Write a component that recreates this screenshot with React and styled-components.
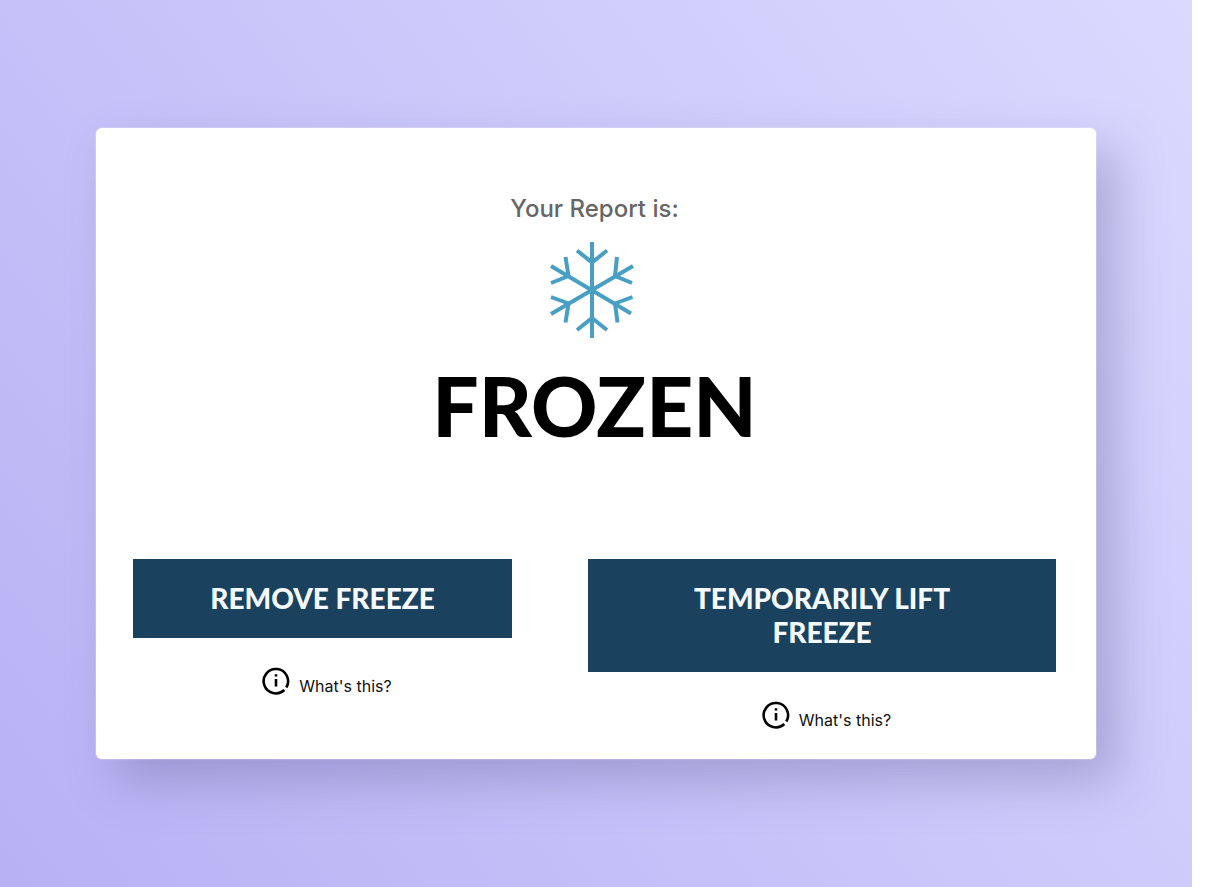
import React from "react";
import styled, { createGlobalStyle } from "styled-components";

const GlobalStyle = createGlobalStyle`
  *, *::before, *::after { box-sizing: border-box; }
  body { margin: 0; background: #ffffff; font-family: Lato, "Liberation Sans", sans-serif; }
`;

const Page = styled.div`
  min-height: 100vh;
  padding-right: 27px;
  display: flex;
`;

const Backdrop = styled.main`
  flex: 1;
  padding: 128px 96px;
  background: linear-gradient(52deg, #b8b1f4 0%, #cac6fa 50%, #dbd9ff 100%);
`;

const Card = styled.section`
  display: flex;
  flex-direction: column;
  align-items: center;
  padding: 64px 40px 27px 37px;
  border-radius: 6px;
  background: #ffffff;
  box-shadow: 0 0 2px rgba(255, 255, 255, 0.7), 20px 22px 48px rgba(92, 86, 140, 0.34);
`;

const Label = styled.p`
  margin: 0;
  font-family: Inter, "Open Sans", sans-serif;
  font-size: 24px;
  line-height: 34px;
  font-weight: 500;
  color: #666666;
`;

const Snowflake = styled.svg`
  margin-top: 16px;
  margin-right: 6px;
  width: 86px;
  height: 96px;
  fill: none;
  stroke: #479fc4;
  stroke-width: 4;
`;

const Status = styled.h1`
  margin: 17px 0 104px;
  font-size: 82px;
  line-height: 100px;
  font-weight: 900;
  color: #000000;
`;

const Actions = styled.div`
  align-self: stretch;
  display: grid;
  grid-template-columns: 379fr 468fr;
  column-gap: 76px;
  align-items: start;
`;

const Action = styled.div`
  display: flex;
  flex-direction: column;
  align-items: center;
  gap: 29px;
`;

const ActionButton = styled.button`
  width: 100%;
  padding: 22px 64px 23px;
  border: 0;
  background: #1a415e;
  color: #f4faff;
  font: 900 28px/34px Lato, "Liberation Sans", sans-serif;
  text-transform: uppercase;
  cursor: pointer;
`;

const HelpButton = styled.button`
  display: flex;
  align-items: flex-start;
  gap: 9px;
  margin-left: 9px;
  padding: 0;
  border: 0;
  background: none;
  color: #111111;
  font: 400 16px/24px Inter, "Open Sans", sans-serif;
  cursor: pointer;
`;

const HelpText = styled.span`
  padding-top: 7px;
`;

const InfoIcon = styled.svg`
  width: 28px;
  height: 28px;
  fill: none;
  stroke: #000000;
  stroke-width: 2.6;
`;

function Help() {
  return (
    <HelpButton type="button">
      <InfoIcon viewBox="0 0 28 28" aria-hidden="true">
        <path d="M24.3 20.5 A12.2 12.2 0 1 0 22.3 23" />
        <path d="M14 12 V19.4 M14 7.2 V9.6" />
      </InfoIcon>
      <HelpText>What's this?</HelpText>
    </HelpButton>
  );
}

const actions = ["Remove Freeze", "Temporarily Lift Freeze"];

export default function App() {
  return (
    <>
      <GlobalStyle />
      <Page>
        <Backdrop>
          <Card>
            <Label>Your Report is:</Label>
            <Snowflake viewBox="0 0 86 96" aria-hidden="true">
              <path d="M43 0 V96 M2 24 L82 71.5 M84 24 L2 72" />
              <path d="M28 8.5 L43 20.5 L58 8.5 M28 88 L43 76 L58 88" />
              <path d="M68 15 L66 34 L83 41 M16.5 15 L19.5 34 L2 41" />
              <path d="M2 55 L19.5 61.5 L16.5 80.5 M83.5 55 L66 61.5 L68.5 80.5" />
            </Snowflake>
            <Status>FROZEN</Status>
            <Actions>
              {actions.map((name) => (
                <Action key={name}>
                  <ActionButton type="button">{name}</ActionButton>
                  <Help />
                </Action>
              ))}
            </Actions>
          </Card>
        </Backdrop>
      </Page>
    </>
  );
}
